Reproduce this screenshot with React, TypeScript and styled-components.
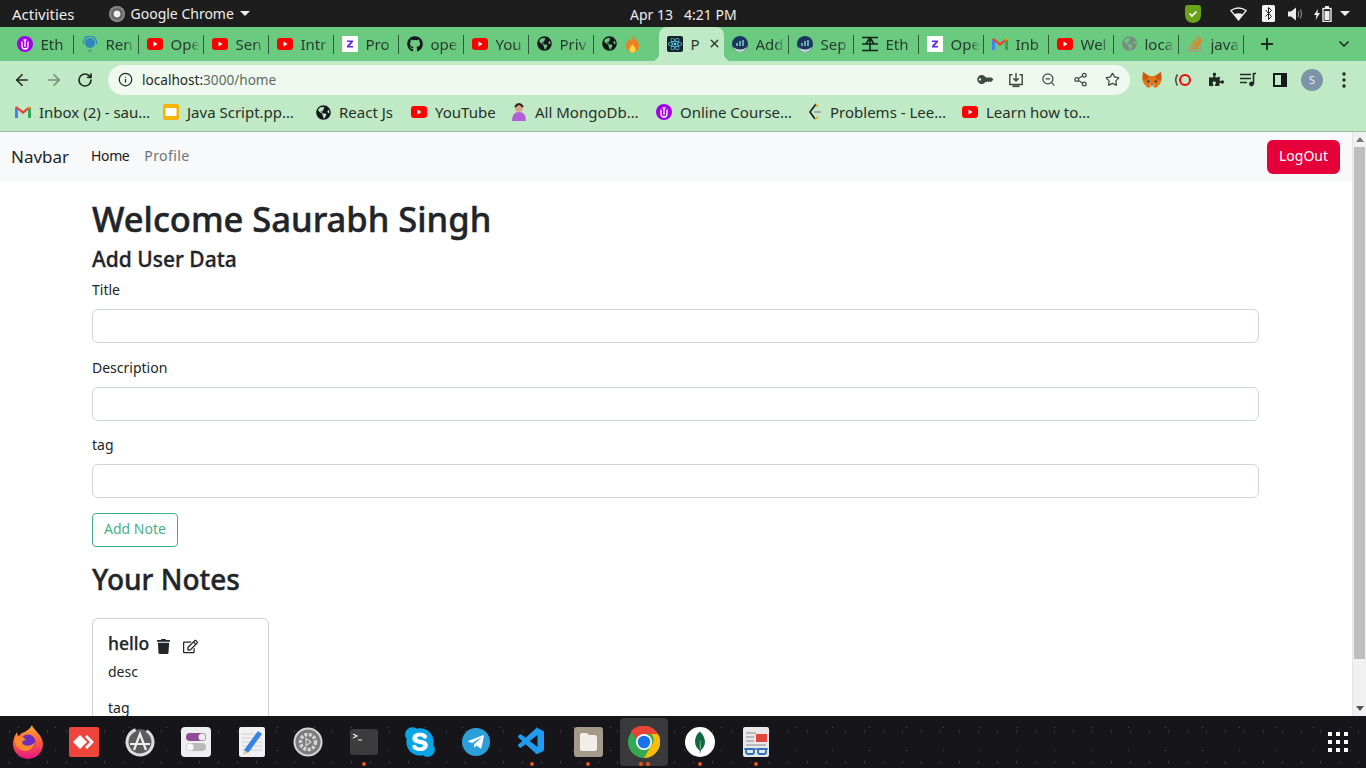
import React from "react";
import styled, { createGlobalStyle } from "styled-components";
import { FaGithub, FaGlobeAmericas, FaReact, FaSkype, FaTelegramPlane, FaTrash, FaPuzzlePiece, FaKey, FaRegEdit } from "react-icons/fa";
import { SiMongodb } from "react-icons/si";
import { VscVscode } from "react-icons/vsc";
import { ArrowLeft, ArrowRight, RotateCw, Info, ZoomOut, Share2, Star, ChevronDown, Plus, X } from "lucide-react";

const GlobalStyle = createGlobalStyle`
  html, body {
    margin: 0;
    height: 100%;
    overflow: hidden;
    font-family: "Noto Sans", "Open Sans", sans-serif;
    color: #212529;
    background: #fff;
  }
  * { box-sizing: border-box; }
`;

const Screen = styled.div`
  display: flex;
  flex-direction: column;
  height: 768px;
  width: 1366px;
  overflow: hidden;
`;

const TopBar = styled.div`
  flex: 0 0 27px;
  display: flex;
  align-items: center;
  position: relative;
  background: #1d1d1d;
  color: #ededed;
  font-size: 14px;
  padding: 0 12px;
`;

const Activities = styled.span`
  font-size: 15px;
`;

const AppMenu = styled.div`
  display: flex;
  align-items: center;
  gap: 6px;
  margin-left: 34px;
`;

const ChromeBadge = styled.span`
  width: 16px;
  height: 16px;
  border-radius: 50%;
  background: radial-gradient(circle, #eee 0 3px, #555 4px, #999 8px);
`;

const Caret = styled.span`
  width: 0;
  height: 0;
  border-left: 5px solid transparent;
  border-right: 5px solid transparent;
  border-top: 5px solid #ededed;
`;

const Clock = styled.div`
  position: absolute;
  left: 630px;
  top: 5px;
  display: flex;
  gap: 11px;
`;

const Tray = styled.div`
  margin-left: auto;
  display: flex;
  align-items: center;
`;

const TraySlot = styled.span<{ $w: number }>`
  display: flex;
  justify-content: center;
  width: ${(p) => p.$w}px;
`;

const TabStrip = styled.div`
  flex: 0 0 34px;
  display: flex;
  background: #69ca80;
  padding-left: 8.5px;
  position: relative;
`;

const Tab = styled.div<{ $plain?: boolean }>`
  flex: none;
  width: 65px;
  height: 34px;
  display: flex;
  align-items: center;
  gap: 8px;
  padding: 0 0 1px 8px;
  overflow: hidden;
  position: relative;
  font-size: 15px;
  color: #2a3a2e;
  white-space: nowrap;
  &::after {
    content: "";
    display: ${(p) => (p.$plain ? "none" : "block")};
    position: absolute;
    right: 0;
    top: 8px;
    bottom: 7px;
    width: 1px;
    background: #31593b;
  }
`;

const TabLabel = styled.span`
  width: 29px;
  flex: none;
  overflow: hidden;
  -webkit-mask-image: linear-gradient(to right, #000 68%, transparent);
  mask-image: linear-gradient(to right, #000 68%, transparent);
`;

const ActiveTab = styled.div`
  flex: none;
  width: 65px;
  height: 34px;
  background: #c0e9c6;
  border-radius: 8px 8px 0 0;
  display: flex;
  align-items: center;
  gap: 8px;
  padding: 0 0 1px 8px;
  font-size: 15px;
  color: #2a3a2e;
  position: relative;
  &::before,
  &::after {
    content: "";
    position: absolute;
    bottom: 0;
    width: 8px;
    height: 8px;
  }
  &::before {
    left: -8px;
    background: radial-gradient(circle at 0 0, transparent 8px, #c0e9c6 8.5px);
  }
  &::after {
    right: -8px;
    background: radial-gradient(circle at 100% 0, transparent 8px, #c0e9c6 8.5px);
  }
`;

const NewTab = styled.div`
  margin-left: 14px;
  display: flex;
  align-items: center;
  color: #1b2a1f;
`;

const TabMenu = styled.div`
  position: absolute;
  right: 14px;
  top: 9px;
  color: #1b2a1f;
  display: flex;
`;

const Toolbar = styled.div`
  flex: 0 0 37px;
  display: flex;
  align-items: center;
  background: #c0e9c6;
  padding-left: 13px;
  color: #1f2a22;
`;

const NavButton = styled.span<{ $dim?: boolean }>`
  display: flex;
  width: 32px;
  color: ${(p) => (p.$dim ? "#73907a" : "#1f2a22")};
`;

const Omnibox = styled.div`
  width: 1022px;
  height: 30px;
  margin-left: -1px;
  background: #eff9f0;
  border-radius: 15px;
  display: flex;
  align-items: center;
  padding: 0 2px 0 10px;
  font-size: 13.6px;
  color: #1f2a22;
`;

const Host = styled.span`
  margin-left: 9px;
`;

const Path = styled.span`
  color: #5f6b62;
`;

const OmniActions = styled.div`
  margin-left: auto;
  display: flex;
  align-items: center;
  color: #3f4a42;
`;

const IconSlot = styled.span`
  width: 32px;
  display: flex;
  justify-content: center;
  align-items: center;
`;

const Extensions = styled.div`
  display: flex;
  align-items: center;
  margin-left: 6px;
  color: #1f2a22;
`;

const Avatar = styled.span`
  width: 22px;
  height: 22px;
  border-radius: 50%;
  background: #7d93a8;
  color: #eef;
  font-size: 11px;
  display: flex;
  align-items: center;
  justify-content: center;
`;

const Bookmarks = styled.div`
  flex: 0 0 34px;
  display: flex;
  align-items: center;
  background: #c0e9c6;
  border-bottom: 1px solid #9dbda3;
  padding: 0 0 5px 15px;
  font-size: 15px;
  color: #26312a;
`;

const Bookmark = styled.div<{ $w: number }>`
  display: flex;
  align-items: center;
  gap: 8px;
  flex: 0 0 ${(p) => p.$w}px;
  white-space: nowrap;
`;

const Viewport = styled.div`
  flex: 1;
  display: flex;
  min-height: 0;
`;

const Page = styled.div`
  flex: 1;
  min-width: 0;
  overflow: hidden;
`;

const Navbar = styled.nav`
  height: 49px;
  background: #f8f9fa;
  display: flex;
  align-items: center;
  padding: 0 12px 0 11px;
`;

const Brand = styled.span`
  font-size: 17px;
  margin-right: 22px;
  color: #212529;
  padding-bottom: 1px;
`;

const NavLink = styled.span<{ $active?: boolean }>`
  font-size: 14px;
  margin-right: 15px;
  padding-bottom: 2px;
  letter-spacing: ${(p) => (p.$active ? "-0.4px" : "0.4px")};
  color: ${(p) => (p.$active ? "#16181a" : "#6c7378")};
`;

const LogOut = styled.button`
  margin-left: auto;
  width: 73px;
  height: 34px;
  border: 0;
  border-radius: 6px;
  padding: 0 0 2px;
  background: #e60039;
  color: #fff;
  font: inherit;
  font-size: 14px;
`;

const Container = styled.main`
  width: 1167px;
  margin-left: 92px;
  padding-top: 15px;
`;

const Title = styled.h1`
  margin: 0;
  font-size: 34.5px;
  font-weight: 500;
  line-height: 46px;
  -webkit-text-stroke: 0.5px #212529;
`;

const SubTitle = styled.h3`
  margin: 4px 0 6px;
  font-size: 21px;
  font-weight: 500;
  line-height: 27px;
  -webkit-text-stroke: 0.3px #212529;
`;

const Field = styled.div`
  margin-bottom: 13.5px;
`;

const Label = styled.label`
  display: block;
  font-size: 14px;
  line-height: 21px;
  margin-bottom: 9px;
`;

const Input = styled.input`
  display: block;
  width: 100%;
  height: 34px;
  border: 1px solid #ced4da;
  border-radius: 6px;
  background: #fff;
`;

const AddButton = styled.button`
  display: block;
  width: 86px;
  height: 34px;
  margin-top: 15px;
  border: 1px solid #45b08c;
  border-radius: 4px;
  padding: 0 0 4px;
  background: #fff;
  color: #45b08c;
  font: inherit;
  font-size: 14px;
`;

const SectionTitle = styled.h2`
  margin: 14px 0 21px;
  font-size: 28px;
  font-weight: 500;
  line-height: 36px;
  -webkit-text-stroke: 0.4px #212529;
`;

const Card = styled.div`
  width: 177px;
  height: 140px;
  border: 1px solid #cfcfcf;
  border-radius: 6px;
  padding: 12px 15px;
`;

const CardHead = styled.div`
  display: flex;
  align-items: center;
  font-size: 17.5px;
  font-weight: 500;
  line-height: 24px;
  -webkit-text-stroke: 0.25px #212529;
`;

const CardIcon = styled.span`
  display: flex;
  margin-left: 7px;
  font-size: 15px;
  padding-top: 6px;
  width: 20px;
`;

const CardText = styled.p`
  margin: 6px 0 15px;
  font-size: 14px;
  line-height: 21px;
`;

const Scrollbar = styled.div`
  flex: 0 0 14px;
  background: #f1f1f1;
  border-left: 1px solid #e4e4e4;
  display: flex;
  flex-direction: column;
  align-items: center;
  padding: 5px 1px;
`;

const ScrollUp = styled.span`
  border-left: 4px solid transparent;
  border-right: 4px solid transparent;
  border-bottom: 5px solid #777;
`;

const ScrollDown = styled.span`
  border-left: 4px solid transparent;
  border-right: 4px solid transparent;
  border-top: 5px solid #555;
  margin-top: auto;
`;

const Thumb = styled.div`
  width: 100%;
  height: 512px;
  margin-top: 5px;
  background: #bebebe;
`;

const Dock = styled.div`
  flex: 0 0 52px;
  display: flex;
  align-items: center;
  position: relative;
  background-color: #15151a;
  background-image: radial-gradient(#55505a 0.5px, transparent 1px), radial-gradient(#3a3640 0.5px, transparent 1px);
  background-size: 37px 23px, 19px 31px;
`;

const DockSlot = styled.div<{ $active?: boolean }>`
  width: 48px;
  height: 48px;
  margin: 0 4px;
  display: flex;
  align-items: center;
  justify-content: center;
  position: relative;
  border-radius: 4px;
  background: ${(p) => (p.$active ? "#3a3a3d" : "transparent")};
`;

const DockDots = styled.div`
  position: absolute;
  bottom: 0;
  left: 0;
  right: 0;
  display: flex;
  justify-content: center;
  gap: 3px;
`;

const Dot = styled.span`
  width: 4px;
  height: 4px;
  border-radius: 50%;
  background: #e95420;
`;

const AppGrid = styled.div`
  position: absolute;
  right: 18px;
  top: 16px;
  display: grid;
  grid-template-columns: repeat(3, 4px);
  gap: 4px;
`;

const GridDot = styled.span`
  width: 4px;
  height: 4px;
  background: #fff;
`;

const ShieldIcon = () => (
  <svg width="16" height="19" viewBox="0 0 16 19">
    <path d="M3 1h10q3 0 3 3v7q0 7-8 8-8-1-8-8V4q0-3 3-3z" fill="#6aa31a" />
    <path d="M4.500 9.500l2.500 2.500 4.500-4.500" fill="none" stroke="#fff" strokeWidth="1.700" />
  </svg>
);

const WifiIcon = () => (
  <svg width="17" height="14" viewBox="0 0 17 14">
    <path d="M.8 3.500Q8.500-1.500 16.200 3.500L8.500 13z" fill="none" stroke="#ededed" strokeWidth="1.300" />
    <path d="M4 7.500q4.500-2.500 9 0L8.500 13z" fill="#ededed" />
  </svg>
);

const BluetoothIcon = () => (
  <svg width="13" height="17" viewBox="0 0 13 17">
    <rect width="13" height="17" rx="1.500" fill="#f4f4f4" />
    <path d="M3.500 5l6 6.500-3 3v-12l3 3-6 6" fill="none" stroke="#1d1d1d" strokeWidth="1" />
  </svg>
);

const VolumeIcon = () => (
  <svg width="16" height="14" viewBox="0 0 16 14">
    <path d="M0 4.500h3L8 .5v13l-5-4H0z" fill="#ededed" />
    <path d="M10 4q1.500 3 0 6M12.500 2.500q2 4.500 0 9" fill="none" stroke="#9a9a9a" strokeWidth="1" />
  </svg>
);

const BatteryIcon = () => (
  <svg width="18" height="16" viewBox="0 0 18 16">
    <path d="M4 3L0 9h2.500L1.500 14 6 7H3.500z" fill="#ededed" />
    <rect x="9" y="2.500" width="8" height="13" fill="none" stroke="#ededed" strokeWidth="1.400" />
    <rect x="11" y="0" width="4" height="2" fill="#ededed" />
    <rect x="10.500" y="5" width="5" height="9" fill="#ededed" />
  </svg>
);

const YouTube = () => (
  <svg width="16" height="12" viewBox="0 0 16 12" style={{ flex: "none" }}>
    <rect width="16" height="12" rx="3" fill="#f00" />
    <path d="M6.500 3.500v5l4-2.500z" fill="#fff" />
  </svg>
);

const Purple = () => (
  <svg width="16" height="16" viewBox="0 0 16 16" style={{ flex: "none" }}>
    <circle cx="8" cy="8" r="8" fill="#a100e8" />
    <path d="M5 5.500V10a3 3 0 0 0 6 0V5.500M8 3.500v7.500M6.500 4h3" fill="none" stroke="#fff" strokeWidth="1.300" />
  </svg>
);

const Remix = () => (
  <svg width="16" height="16" viewBox="0 0 16 16" style={{ flex: "none" }}>
    <circle cx="8" cy="7" r="5" fill="#2f86c0" />
    <path d="M1.500 8V6a6.500 6 0 0 1 13 0v2" fill="none" stroke="#2f86c0" strokeWidth="1.300" />
    <path d="M6 14l2 2 2-2z" fill="#2f86c0" />
  </svg>
);

const Zoho = () => (
  <svg width="16" height="16" viewBox="0 0 16 16" style={{ flex: "none" }}>
    <rect width="16" height="16" fill="#fff" />
    <path d="M5 4.500h6v1.500L7.500 10H11v1.500H5V10l3.500-4H5z" fill="#5b2be0" />
  </svg>
);

const Gmail = () => (
  <svg width="16" height="12" viewBox="0 0 16 12" style={{ flex: "none" }}>
    <path d="M0 12V1.500L3 3v9z" fill="#4285f4" />
    <path d="M13 12V3l3-1.500V12z" fill="#34a853" />
    <path d="M0 1.500L1.800.2 8 5l6.200-4.800L16 1.500 8 8z" fill="#ea4335" />
    <path d="M13 3l1.200-2.800L16 1.500z" fill="#fbbc04" />
  </svg>
);

const Dex = () => (
  <svg width="16" height="16" viewBox="0 0 16 16" style={{ flex: "none" }}>
    <circle cx="8" cy="8" r="8" fill="#1c3560" />
    <path d="M1 11q7 5 14 0q-2 5-7 5t-7-5z" fill="#c8d4d8" />
    <path d="M5 10V7M8 10V5M11 10V4" stroke="#7fd0c0" strokeWidth="1.500" />
  </svg>
);

const Etherscan = () => (
  <svg width="16" height="16" viewBox="0 0 16 16" style={{ flex: "none" }}>
    <path d="M0 1.500h16M0 8h16M0 14.500h16M8 1.500v13M8 1.500L4 8M8 1.500l4 6.500" fill="none" stroke="#10271a" strokeWidth="1.600" />
  </svg>
);

const Flame = () => (
  <svg width="15" height="20" viewBox="0 0 14 18" style={{ flex: "none" }}>
    <path d="M7 0c1 4 6 6 6 11a6 6 0 0 1-12 0c0-3 2-4 3-7 1 1 1.500 2 1.500 3C7 5 7.500 3 7 0z" fill="#f57c1f" />
    <path d="M7 9c1 2 3 3 3 5a3 3 0 0 1-6 0c0-2 2-3 3-5z" fill="#ffd54a" />
  </svg>
);

const Stack = () => (
  <svg width="16" height="17" viewBox="0 0 14 16" style={{ flex: "none" }}>
    <path d="M1 10v5h11v-5" fill="none" stroke="#a89a80" strokeWidth="1.400" />
    <path d="M3 12.500h7M3.200 10l7 .8M4 7.500l6.800 2M5.500 5l6 3.500M8 2.500l4.500 5.500M10.500 .5l2.500 6" stroke="#ef7b23" strokeWidth="1.300" />
  </svg>
);

const ReactTile = () => (
  <span style={{ display: "flex", flex: "none", background: "#17232b", color: "#61dafb", borderRadius: 2, padding: 1 }}>
    <FaReact size={14} />
  </span>
);

const Fox = () => (
  <svg width="20" height="18" viewBox="0 0 20 18">
    <path d="M1 1l7 4h4l7-4 1 7-2 5-4 4-2-1H8l-2 1-4-4-2-5z" fill="#e2761b" />
    <path d="M1 1l6 5-3 3-3-1zM19 1l-6 5 3 3 3-1z" fill="#c05a12" />
    <path d="M4.500 10l3-1-1 3zM15.500 10l-3-1 1 3z" fill="#233447" />
    <path d="M8 13h4l-1 3H9z" fill="#d7c1b3" />
    <path d="M9 13h2l-1 1.500z" fill="#233447" />
  </svg>
);

const Opera = () => (
  <svg width="20" height="16" viewBox="0 0 20 16" style={{ marginLeft: -2 }}>
    <circle cx="12" cy="8" r="5" fill="none" stroke="#f00" strokeWidth="2" />
    <path d="M4.500 2.500Q1 8 4.500 13.500" fill="none" stroke="#444" strokeWidth="1.500" />
  </svg>
);

const Queue = () => (
  <svg width="18" height="15" viewBox="0 0 18 15">
    <path d="M1 2.500h11M1 6.500h11M1 10.500h7" stroke="#1f2a22" strokeWidth="1.500" />
    <path d="M14.500 1v11M14.500 1.500H17" stroke="#1f2a22" strokeWidth="1.600" />
    <circle cx="12.500" cy="12" r="2.400" fill="#1f2a22" />
  </svg>
);

const SidePanel = () => (
  <svg width="14" height="14" viewBox="0 0 14 14">
    <rect x="1" y="1" width="12" height="12" fill="none" stroke="#14181a" strokeWidth="2" />
    <rect x="8" y="1" width="5" height="12" fill="#14181a" />
  </svg>
);

const MoreDots = () => (
  <svg width="4" height="16" viewBox="0 0 4 16" fill="#1f2a22">
    <circle cx="2" cy="2" r="1.700" />
    <circle cx="2" cy="8" r="1.700" />
    <circle cx="2" cy="14" r="1.700" />
  </svg>
);

const SaveIcon = () => (
  <svg width="16" height="16" viewBox="0 0 18 18" fill="none" stroke="#3f4a42" strokeWidth="1.600">
    <path d="M5 3H2v11h14V3h-3M9 1v9M6 7l3 3 3-3" />
    <path d="M5 16h8" strokeWidth="2" />
  </svg>
);

const Leet = () => (
  <svg width="14" height="18" viewBox="0 0 14 18">
    <path d="M8 1L2 9l5 7" fill="none" stroke="#1c1c1c" strokeWidth="1.600" />
    <path d="M8 1l2 3M7 16l3-2" stroke="#f0a71e" strokeWidth="1.600" />
    <path d="M6 9h7" stroke="#a5a5a5" strokeWidth="2" />
  </svg>
);

const Person = () => (
  <svg width="16" height="18" viewBox="0 0 16 18">
    <circle cx="8" cy="5" r="4" fill="#d8a488" />
    <path d="M1 18q0-9 7-9t7 9z" fill="#b25fd6" />
    <path d="M4 4q4-6 8 0" fill="none" stroke="#33221c" strokeWidth="2" />
  </svg>
);

const DriveSlide = () => (
  <svg width="16" height="16" viewBox="0 0 16 16">
    <rect width="16" height="16" rx="2" fill="#f4b400" />
    <rect x="2.500" y="4" width="11" height="8" fill="#fff" />
  </svg>
);

const Firefox = () => (
  <svg width="32" height="34" viewBox="0 0 32 34">
    <defs>
      <linearGradient id="ff" x1="0" y1="0" x2="0" y2="1">
        <stop offset="0" stopColor="#ffb52e" />
        <stop offset=".5" stopColor="#ff5a3c" />
        <stop offset="1" stopColor="#e31587" />
      </linearGradient>
    </defs>
    <path d="M20 0c1 5 11 10 11 19a15 15 0 0 1-30 0C1 14 3 10 5 7c0 2 1 4 2 4 2-4 10-4 13-11z" fill="url(#ff)" />
    <circle cx="16" cy="17" r="7.500" fill="#6d2ec0" />
    <path d="M3 13c4-3 8-2 11 2-4 0-5 3-2 5 4 2 9 0 11-3-1 7-8 11-14 8-5-2-7-7-6-12z" fill="#ff8a2e" />
  </svg>
);

const AnyDesk = () => (
  <svg width="30" height="30" viewBox="0 0 30 30">
    <rect width="30" height="30" rx="2" fill="#ef443b" />
    <path d="M11 8l7 7-7 7-7-7z" fill="#fff" />
    <path d="M18 8l7 7-7 7-2-2 5-5-5-5z" fill="#fff" />
  </svg>
);

const Software = () => (
  <svg width="30" height="30" viewBox="0 0 30 30">
    <circle cx="15" cy="15" r="13" fill="#5c5c5c" stroke="#ddd" strokeWidth="3" strokeDasharray="70 12" transform="rotate(-60 15 15)" />
    <path d="M9 23L15 7l6 16M5 17h20" fill="none" stroke="#eee" strokeWidth="2.200" />
  </svg>
);

const Tweaks = () => (
  <svg width="30" height="30" viewBox="0 0 30 30">
    <rect width="30" height="30" rx="4" fill="#eee" />
    <rect x="5" y="6" width="20" height="8" rx="4" fill="#8e4b96" />
    <circle cx="21" cy="10" r="3.500" fill="#eee" />
    <rect x="5" y="16" width="20" height="8" rx="4" fill="#bbb" />
    <circle cx="9" cy="20" r="3.500" fill="#fafafa" />
  </svg>
);

const Editor = () => (
  <svg width="26" height="30" viewBox="0 0 26 30">
    <rect width="26" height="30" rx="2" fill="#f1f1f1" />
    <path d="M3 7h20M3 11h20M3 15h20M3 19h20M3 23h20" stroke="#cfcfcf" />
    <path d="M5 23L19 4l4 3L9 26z" fill="#3584e4" />
    <path d="M5 23l4 3-5 2z" fill="#e6c9a0" />
  </svg>
);

const Settings = () => (
  <svg width="30" height="30" viewBox="0 0 30 30" fill="none">
    <circle cx="15" cy="15" r="13.500" fill="#7b7b7b" stroke="#d5d5d5" strokeWidth="2" />
    <circle cx="15" cy="15" r="7.500" stroke="#d5d5d5" strokeWidth="3.500" strokeDasharray="3 1.500" />
    <path d="M13 11.500l5 3.500-5 3.500z" stroke="#d5d5d5" strokeWidth="1.200" />
  </svg>
);

const Terminal = () => (
  <svg width="28" height="26" viewBox="0 0 28 26">
    <rect width="28" height="26" rx="3" fill="#3c3c3c" />
    <path d="M3 5l4 2-4 2M8 11h4" fill="none" stroke="#eee" strokeWidth="1.200" />
  </svg>
);

const Files = () => (
  <svg width="29" height="30" viewBox="0 0 29 30">
    <rect width="29" height="30" rx="3" fill="#a39a89" />
    <path d="M6 8a2 2 0 0 1 2-2h5l2 2h6a2 2 0 0 1 2 2v12a2 2 0 0 1-2 2H8a2 2 0 0 1-2-2z" fill="#f0eee9" />
  </svg>
);

const Chrome = () => (
  <svg width="32" height="32" viewBox="0 0 32 32">
    <circle cx="16" cy="16" r="16" fill="#34a853" />
    <path d="M16 0a16 16 0 0 1 14 8H16a8 8 0 0 0-7.500 5L3 5A16 16 0 0 1 16 0z" fill="#ea4335" />
    <path d="M30 8a16 16 0 0 1-14 24l7-12a8 8 0 0 0 0-12z" fill="#fbbc04" />
    <circle cx="16" cy="16" r="8" fill="#fff" />
    <circle cx="16" cy="16" r="6.300" fill="#1a73e8" />
  </svg>
);

const Document = () => (
  <svg width="26" height="30" viewBox="0 0 26 30">
    <rect width="26" height="30" rx="2" fill="#e8e8e8" />
    <path d="M3 6h10M3 10h8M3 14h8M3 18h20" stroke="#8a8a8a" />
    <rect x="13" y="7" width="11" height="8" fill="#e2463c" />
    <path d="M1 22h24" stroke="#2d6fb8" strokeWidth="1.500" />
    <rect x="3" y="22" width="8" height="5" rx="2" fill="none" stroke="#2d6fb8" strokeWidth="1.800" />
    <rect x="15" y="22" width="8" height="5" rx="2" fill="none" stroke="#2d6fb8" strokeWidth="1.800" />
  </svg>
);

const Mongo = () => (
  <span style={{ width: 30, height: 30, borderRadius: "50%", background: "#fff", color: "#11693f", display: "flex", alignItems: "center", justifyContent: "center" }}>
    <SiMongodb size={22} />
  </span>
);

const Skype = () => <FaSkype size={34} color="#0aa5e6" style={{ background: "radial-gradient(circle, #fff 50%, transparent 55%)" }} />;

const Telegram = () => (
  <span style={{ width: 28, height: 28, borderRadius: "50%", background: "#2c9fd9", color: "#fff", display: "flex", alignItems: "center", justifyContent: "center" }}>
    <FaTelegramPlane size={18} />
  </span>
);

type TabItem = { icon: React.ReactNode; label: string };

const leftTabs: TabItem[] = [
  { icon: <Purple />, label: "Eth" },
  { icon: <Remix />, label: "Ren" },
  { icon: <YouTube />, label: "Ope" },
  { icon: <YouTube />, label: "Sen" },
  { icon: <YouTube />, label: "Intr" },
  { icon: <Zoho />, label: "Pro" },
  { icon: <FaGithub size={16} color="#14181a" style={{ flex: "none" }} />, label: "ope" },
  { icon: <YouTube />, label: "You" },
  { icon: <FaGlobeAmericas size={15} color="#14181a" style={{ flex: "none" }} />, label: "Priv" },
];

const rightTabs: TabItem[] = [
  { icon: <Dex />, label: "Add" },
  { icon: <Dex />, label: "Sep" },
  { icon: <Etherscan />, label: "Eth" },
  { icon: <Zoho />, label: "Ope" },
  { icon: <Gmail />, label: "Inb" },
  { icon: <YouTube />, label: "Wel" },
  { icon: <FaGlobeAmericas size={15} color="#7d8a80" style={{ flex: "none" }} />, label: "loca" },
  { icon: <Stack />, label: "java" },
];

const bookmarks = [
  { icon: <Gmail />, label: "Inbox (2) - sau…", width: 148 },
  { icon: <DriveSlide />, label: "Java Script.pp…", width: 153 },
  { icon: <FaGlobeAmericas size={15} color="#14181a" />, label: "React Js", width: 95 },
  { icon: <YouTube />, label: "YouTube", width: 100 },
  { icon: <Person />, label: "All MongoDb…", width: 145 },
  { icon: <Purple />, label: "Online Course…", width: 152 },
  { icon: <Leet />, label: "Problems - Lee…", width: 154 },
  { icon: <YouTube />, label: "Learn how to…", width: 130 },
];

const dockApps: { icon: React.ReactNode; dots?: number; active?: boolean }[] = [
  { icon: <Firefox /> },
  { icon: <AnyDesk /> },
  { icon: <Software /> },
  { icon: <Tweaks /> },
  { icon: <Editor /> },
  { icon: <Settings /> },
  { icon: <Terminal />, dots: 1 },
  { icon: <Skype /> },
  { icon: <Telegram /> },
  { icon: <VscVscode size={32} color="#1f9cf0" />, dots: 1 },
  { icon: <Files />, dots: 1 },
  { icon: <Chrome />, dots: 2, active: true },
  { icon: <Mongo />, dots: 1 },
  { icon: <Document />, dots: 1 },
];

const formFields = ["Title", "Description", "tag"];

export default function App() {
  return (
    <>
      <GlobalStyle />
      <Screen>
        <TopBar>
          <Activities>Activities</Activities>
          <AppMenu>
            <ChromeBadge />
            Google Chrome
            <Caret />
          </AppMenu>
          <Clock>
            <span>Apr 13</span>
            <span>4:21 PM</span>
          </Clock>
          <Tray>
            <TraySlot $w={58}>
              <ShieldIcon />
            </TraySlot>
            <TraySlot $w={33}>
              <WifiIcon />
            </TraySlot>
            <TraySlot $w={27}>
              <BluetoothIcon />
            </TraySlot>
            <TraySlot $w={27}>
              <VolumeIcon />
            </TraySlot>
            <TraySlot $w={27}>
              <BatteryIcon />
            </TraySlot>
            <TraySlot $w={18}>
              <Caret />
            </TraySlot>
          </Tray>
        </TopBar>
        <TabStrip>
          {leftTabs.map((t, i) => (
            <Tab key={i}>
              {t.icon}
              <TabLabel>{t.label}</TabLabel>
            </Tab>
          ))}
          <Tab $plain>
            <FaGlobeAmericas size={15} color="#14181a" style={{ flex: "none" }} />
            <Flame />
          </Tab>
          <ActiveTab>
            <ReactTile />P
            <X size={13} strokeWidth={2.5} />
          </ActiveTab>
          {rightTabs.map((t, i) => (
            <Tab key={i}>
              {t.icon}
              <TabLabel>{t.label}</TabLabel>
            </Tab>
          ))}
          <NewTab>
            <Plus size={18} strokeWidth={2.5} />
          </NewTab>
          <TabMenu>
            <ChevronDown size={16} strokeWidth={2.5} />
          </TabMenu>
        </TabStrip>
        <Toolbar>
          <NavButton>
            <ArrowLeft size={18} strokeWidth={2.2} />
          </NavButton>
          <NavButton $dim>
            <ArrowRight size={18} strokeWidth={2.2} />
          </NavButton>
          <NavButton>
            <RotateCw size={16} strokeWidth={2.5} />
          </NavButton>
          <Omnibox>
            <Info size={15} strokeWidth={2} />
            <Host>
              localhost:<Path>3000/home</Path>
            </Host>
            <OmniActions>
              <IconSlot>
                <FaKey size={13} style={{ transform: "scaleX(-1) rotate(45deg)" }} />
              </IconSlot>
              <IconSlot>
                <SaveIcon />
              </IconSlot>
              <IconSlot>
                <ZoomOut size={15} />
              </IconSlot>
              <IconSlot>
                <Share2 size={15} />
              </IconSlot>
              <IconSlot>
                <Star size={15} />
              </IconSlot>
            </OmniActions>
          </Omnibox>
          <Extensions>
            <IconSlot>
              <Fox />
            </IconSlot>
            <IconSlot>
              <Opera />
            </IconSlot>
            <IconSlot>
              <FaPuzzlePiece size={15} />
            </IconSlot>
            <IconSlot>
              <Queue />
            </IconSlot>
            <IconSlot>
              <SidePanel />
            </IconSlot>
            <IconSlot>
              <Avatar>S</Avatar>
            </IconSlot>
            <IconSlot>
              <MoreDots />
            </IconSlot>
          </Extensions>
        </Toolbar>
        <Bookmarks>
          {bookmarks.map((b) => (
            <Bookmark key={b.label} $w={b.width}>
              {b.icon}
              {b.label}
            </Bookmark>
          ))}
        </Bookmarks>
        <Viewport>
          <Page>
            <Navbar>
              <Brand>Navbar</Brand>
              <NavLink $active>Home</NavLink>
              <NavLink>Profile</NavLink>
              <LogOut>LogOut</LogOut>
            </Navbar>
            <Container>
              <Title>Welcome Saurabh Singh</Title>
              <SubTitle>Add User Data</SubTitle>
              {formFields.map((f) => (
                <Field key={f}>
                  <Label>{f}</Label>
                  <Input />
                </Field>
              ))}
              <AddButton>Add Note</AddButton>
              <SectionTitle>Your Notes</SectionTitle>
              <Card>
                <CardHead>
                  hello
                  <CardIcon>
                    <FaTrash />
                  </CardIcon>
                  <CardIcon>
                    <FaRegEdit />
                  </CardIcon>
                </CardHead>
                <CardText>desc</CardText>
                <CardText>tag</CardText>
              </Card>
            </Container>
          </Page>
          <Scrollbar>
            <ScrollUp />
            <Thumb />
            <ScrollDown />
          </Scrollbar>
        </Viewport>
        <Dock>
          {dockApps.map((a, i) => (
            <DockSlot key={i} $active={a.active}>
              {a.icon}
              {a.dots ? (
                <DockDots>
                  {Array.from({ length: a.dots }).map((_, d) => (
                    <Dot key={d} />
                  ))}
                </DockDots>
              ) : null}
            </DockSlot>
          ))}
          <AppGrid>
            {Array.from({ length: 9 }).map((_, i) => (
              <GridDot key={i} />
            ))}
          </AppGrid>
        </Dock>
      </Screen>
    </>
  );
}
